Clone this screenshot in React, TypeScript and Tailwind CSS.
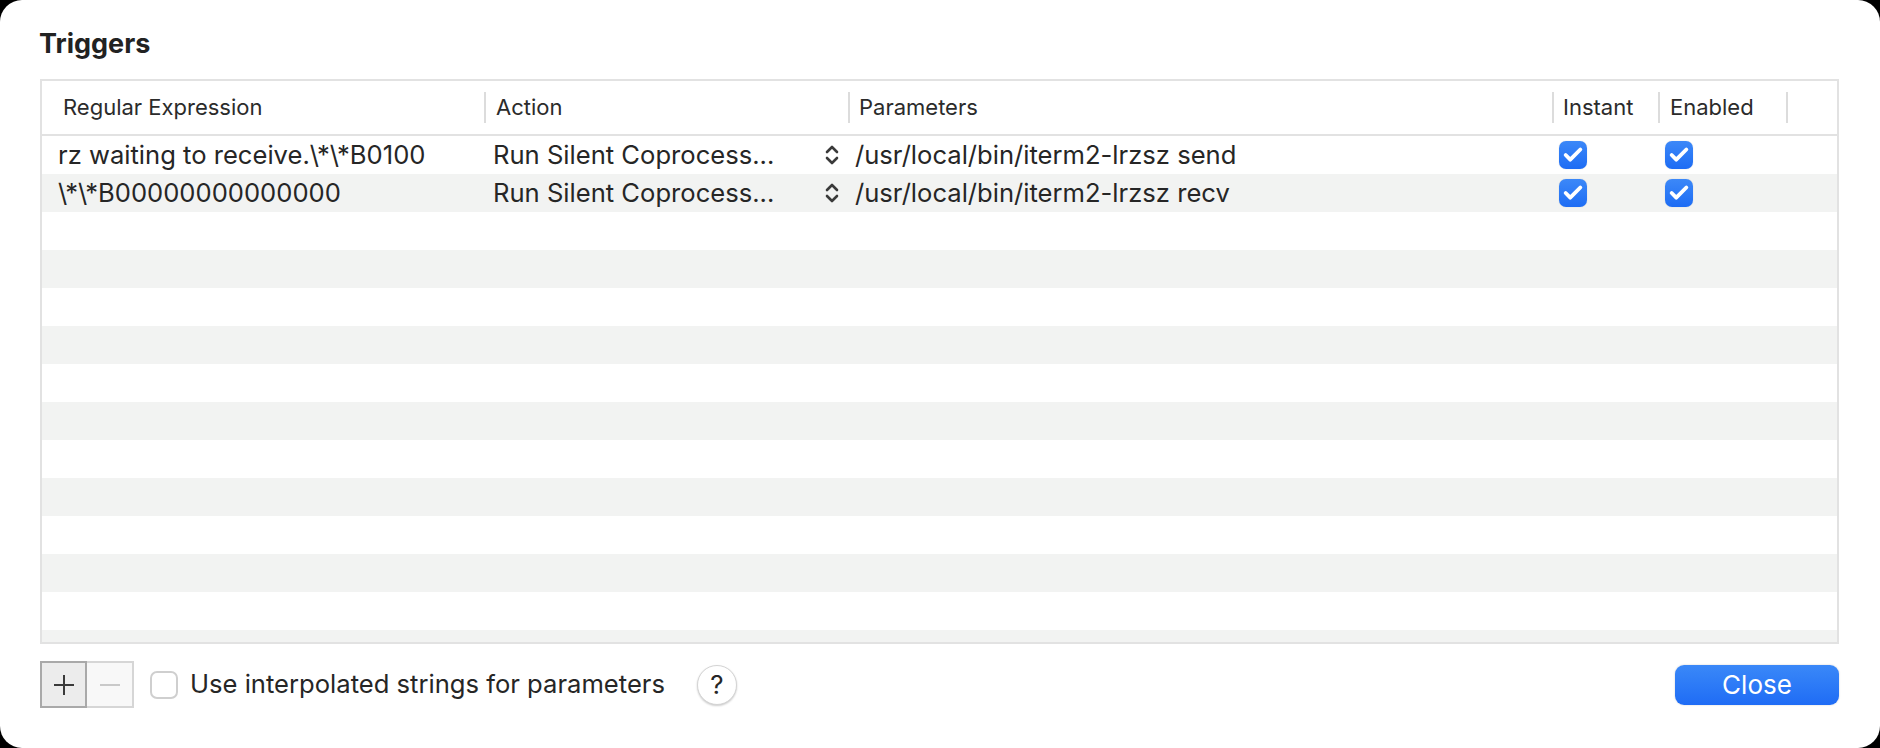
import { Check } from "lucide-react";

const rows = [
  {
    regex: "rz waiting to receive.\\*\\*B0100",
    action: "Run Silent Coprocess...",
    params: "/usr/local/bin/iterm2-lrzsz send",
  },
  {
    regex: "\\*\\*B00000000000000",
    action: "Run Silent Coprocess...",
    params: "/usr/local/bin/iterm2-lrzsz recv",
  },
];

const font = { fontFamily: "Inter, 'Noto Sans', sans-serif" };

function Chevrons() {
  return (
    <svg width="16" height="24" viewBox="0 0 16 24" fill="none" stroke="#3a3a3a" strokeWidth="2.6" strokeLinecap="round" strokeLinejoin="round">
      <path d="M3 9 L8 4 L13 9" />
      <path d="M3 15 L8 20 L13 15" />
    </svg>
  );
}

function Tick() {
  return (
    <div className="w-[28px] h-[28px] rounded-[7px] bg-gradient-to-b from-[#3c88f8] to-[#1d6cf4] flex items-center justify-center shadow-[0_0_1px_rgba(0,0,0,0.25)]">
      <Check size={22} color="white" strokeWidth={4.2} />
    </div>
  );
}

function HeaderCell({ label, sep, pad }: { label: string; sep: boolean; pad: string }) {
  return (
    <div className="flex items-center h-full">
      {sep && <div className="w-[2px] h-[31px] bg-[#dcdcdc] shrink-0" />}
      <span className={`${pad} text-[22px] text-[#2b2b2b]`}>{label}</span>
    </div>
  );
}

export default function App() {
  const stripes = Array.from({ length: 14 }, (_, i) => i);
  return (
    <div className="w-[1880px] h-[748px] bg-black" style={font}>
      <div className="w-full h-full bg-white rounded-[22px] pl-[40px] pr-[41px] flex flex-col">
        <div className="pt-[28px] leading-[32px] text-[27px] font-bold text-[#222] -ml-[1px]">Triggers</div>

        <div className="mt-[19px] h-[565px] border-2 border-[#e2e2e2] flex flex-col overflow-hidden">
          <div className="h-[55px] shrink-0 border-b-2 border-[#e2e2e2] grid grid-cols-[442px_364px_704px_106px_128px_1fr]">
            <HeaderCell label="Regular Expression" sep={false} pad="pl-[21px]" />
            <HeaderCell label="Action" sep pad="pl-[10px]" />
            <HeaderCell label="Parameters" sep pad="pl-[9px]" />
            <HeaderCell label="Instant" sep pad="pl-[9px]" />
            <HeaderCell label="Enabled" sep pad="pl-[10px]" />
            <HeaderCell label="" sep pad="" />
          </div>

          <div className="flex-1 overflow-hidden">
            {stripes.map((i) => {
              const r = rows[i];
              return (
                <div
                  key={i}
                  className={`h-[38px] grid grid-cols-[442px_364px_704px_106px_128px_1fr] items-center text-[25.6px] text-[#262626] ${
                    i % 2 === 1 ? "bg-[#f2f3f2]" : "bg-white"
                  }`}
                >
                  {r && (
                    <>
                      <span className="pl-[16px] whitespace-nowrap">{r.regex}</span>
                      <div className="flex items-center pl-[9px] pr-[8px]">
                        <span className="flex-1 whitespace-nowrap">{r.action}</span>
                        <Chevrons />
                      </div>
                      <span className="pl-[7px] whitespace-nowrap">{r.params}</span>
                      <div className="pl-[7px]">
                        <Tick />
                      </div>
                      <div className="pl-[7px]">
                        <Tick />
                      </div>
                      <div />
                    </>
                  )}
                </div>
              );
            })}
          </div>
        </div>

        <div className="mt-[17px] flex items-center">
          <div className="flex">
            <div className="w-[47px] h-[47px] bg-[#ececec] border-2 border-[#a9a9a9] flex items-center justify-center">
              <svg width="22" height="22" viewBox="0 0 22 22" stroke="#3a3a3a" strokeWidth="2">
                <path d="M11 1 V21 M1 11 H21" />
              </svg>
            </div>
            <div className="w-[47px] h-[47px] bg-[#f8f8f8] border-2 border-l-0 border-[#d6d6d6] flex items-center justify-center">
              <svg width="20" height="4" viewBox="0 0 20 4" stroke="#c9c9c9" strokeWidth="2">
                <path d="M0 2 H20" />
              </svg>
            </div>
          </div>

          <div className="ml-[16px] w-[28px] h-[28px] rounded-[7px] border-2 border-[#cfcfcf] bg-white" />
          <span className="ml-[12px] text-[25.6px] text-[#262626]">Use interpolated strings for parameters</span>

          <div className="ml-[32px] w-[40px] h-[40px] rounded-full bg-white border border-[#d4d4d4] shadow-[0_1px_2px_rgba(0,0,0,0.2)] flex items-center justify-center text-[26px] text-[#262626]">
            ?
          </div>

          <div className="flex-1" />
          <button className="w-[164px] h-[40px] rounded-[9px] bg-gradient-to-b from-[#3a88f8] to-[#1f6cf5] text-white text-[26px] shadow-[0_0_2px_rgba(0,0,0,0.2)]">
            Close
          </button>
        </div>
      </div>
    </div>
  );
}
